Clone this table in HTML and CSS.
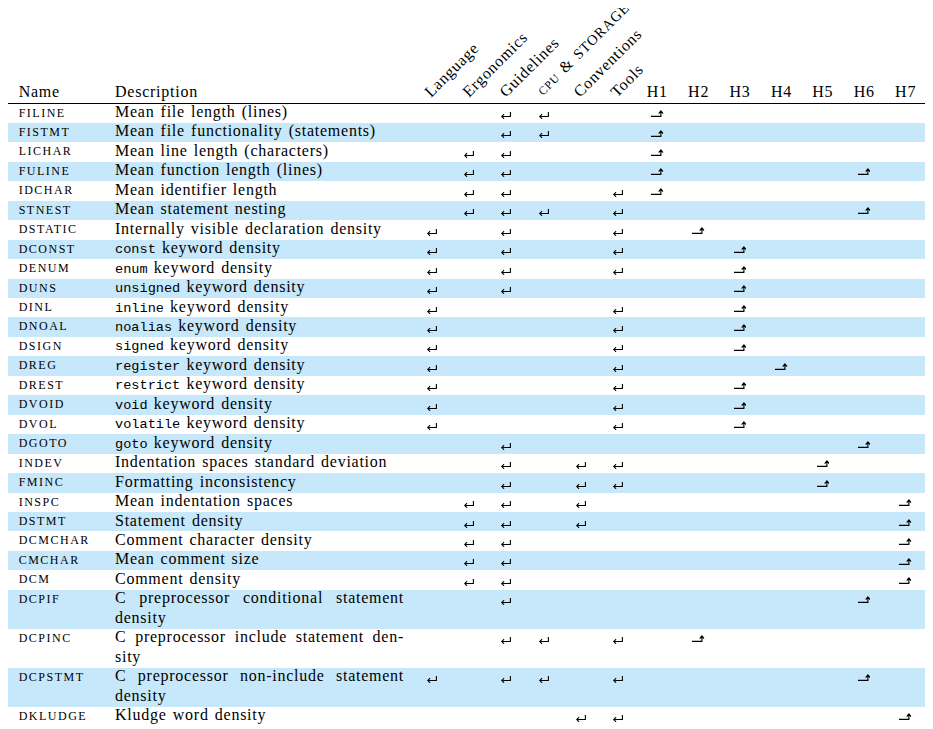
FILE: index.html
```html
<!DOCTYPE html>
<html lang="en">
<head>
<meta charset="utf-8">
<title>Metrics table</title>
<link rel="stylesheet" href="styles.css">
</head>
<body>
<svg class="defs" width="0" height="0" aria-hidden="true">
  <defs>
    <symbol id="ret" viewBox="0 0 10 7"><path d="M9.4 0V4.5H0.9M3.1 2.2L0.7 4.5L3.1 6.8" fill="none" stroke="#000" stroke-width="1.1"/></symbol>
    <symbol id="up" viewBox="0 0 12.5 7"><path d="M0 6.4H9.9V1.4M7.7 3.6L9.9 1.0L12.1 3.6" fill="none" stroke="#000" stroke-width="1.15"/></symbol>
  </defs>
</svg>
<table class="tbl">
  <colgroup>
    <col class="c-name"><col class="c-desc">
    <col class="c-a"><col class="c-a"><col class="c-a"><col class="c-a"><col class="c-a"><col class="c-a">
    <col class="c-h"><col class="c-h"><col class="c-h"><col class="c-h"><col class="c-h"><col class="c-h"><col class="c-h">
  </colgroup>
  <thead>
    <tr>
      <th class="h-name">Name</th>
      <th class="h-desc">Description</th>
      <th class="h-rot"><span class="rot">Language</span></th>
      <th class="h-rot"><span class="rot">Ergonomics</span></th>
      <th class="h-rot"><span class="rot">Guidelines</span></th>
      <th class="h-rot"><span class="rot"><span class="sc-s">CPU</span> &amp; <span class="sc-l">STORAGE</span></span></th>
      <th class="h-rot"><span class="rot">Conventions</span></th>
      <th class="h-rot"><span class="rot">Tools</span></th>
      <th class="h-h">H1</th><th class="h-h">H2</th><th class="h-h">H3</th><th class="h-h">H4</th><th class="h-h">H5</th><th class="h-h">H6</th><th class="h-h">H7</th>
    </tr>
  </thead>
  <tbody>
    <tr><td class="n">FILINE</td><td class="d"><div class="t">Mean file length (lines)</div></td>
      <td></td><td></td><td><svg class="ret"><use href="#ret"/></svg></td><td><svg class="ret"><use href="#ret"/></svg></td><td></td><td></td>
      <td><svg class="up"><use href="#up"/></svg></td><td></td><td></td><td></td><td></td><td></td><td></td></tr>
    <tr><td class="n">FISTMT</td><td class="d"><div class="t">Mean file functionality (statements)</div></td>
      <td></td><td></td><td><svg class="ret"><use href="#ret"/></svg></td><td><svg class="ret"><use href="#ret"/></svg></td><td></td><td></td>
      <td><svg class="up"><use href="#up"/></svg></td><td></td><td></td><td></td><td></td><td></td><td></td></tr>
    <tr><td class="n">LICHAR</td><td class="d"><div class="t">Mean line length (characters)</div></td>
      <td></td><td><svg class="ret"><use href="#ret"/></svg></td><td><svg class="ret"><use href="#ret"/></svg></td><td></td><td></td><td></td>
      <td><svg class="up"><use href="#up"/></svg></td><td></td><td></td><td></td><td></td><td></td><td></td></tr>
    <tr><td class="n">FULINE</td><td class="d"><div class="t">Mean function length (lines)</div></td>
      <td></td><td><svg class="ret"><use href="#ret"/></svg></td><td><svg class="ret"><use href="#ret"/></svg></td><td></td><td></td><td></td>
      <td><svg class="up"><use href="#up"/></svg></td><td></td><td></td><td></td><td></td><td><svg class="up"><use href="#up"/></svg></td><td></td></tr>
    <tr><td class="n">IDCHAR</td><td class="d"><div class="t">Mean identifier length</div></td>
      <td></td><td><svg class="ret"><use href="#ret"/></svg></td><td><svg class="ret"><use href="#ret"/></svg></td><td></td><td></td><td><svg class="ret"><use href="#ret"/></svg></td>
      <td><svg class="up"><use href="#up"/></svg></td><td></td><td></td><td></td><td></td><td></td><td></td></tr>
    <tr><td class="n">STNEST</td><td class="d"><div class="t">Mean statement nesting</div></td>
      <td></td><td><svg class="ret"><use href="#ret"/></svg></td><td><svg class="ret"><use href="#ret"/></svg></td><td><svg class="ret"><use href="#ret"/></svg></td><td></td><td><svg class="ret"><use href="#ret"/></svg></td>
      <td></td><td></td><td></td><td></td><td></td><td><svg class="up"><use href="#up"/></svg></td><td></td></tr>
    <tr><td class="n">DSTATIC</td><td class="d"><div class="t">Internally visible declaration density</div></td>
      <td><svg class="ret"><use href="#ret"/></svg></td><td></td><td><svg class="ret"><use href="#ret"/></svg></td><td></td><td></td><td><svg class="ret"><use href="#ret"/></svg></td>
      <td></td><td><svg class="up"><use href="#up"/></svg></td><td></td><td></td><td></td><td></td><td></td></tr>
    <tr><td class="n">DCONST</td><td class="d"><div class="t"><span class="tt">const</span> keyword density</div></td>
      <td><svg class="ret"><use href="#ret"/></svg></td><td></td><td><svg class="ret"><use href="#ret"/></svg></td><td></td><td></td><td><svg class="ret"><use href="#ret"/></svg></td>
      <td></td><td></td><td><svg class="up"><use href="#up"/></svg></td><td></td><td></td><td></td><td></td></tr>
    <tr><td class="n">DENUM</td><td class="d"><div class="t"><span class="tt">enum</span> keyword density</div></td>
      <td><svg class="ret"><use href="#ret"/></svg></td><td></td><td><svg class="ret"><use href="#ret"/></svg></td><td></td><td></td><td><svg class="ret"><use href="#ret"/></svg></td>
      <td></td><td></td><td><svg class="up"><use href="#up"/></svg></td><td></td><td></td><td></td><td></td></tr>
    <tr><td class="n">DUNS</td><td class="d"><div class="t"><span class="tt">unsigned</span> keyword density</div></td>
      <td><svg class="ret"><use href="#ret"/></svg></td><td></td><td><svg class="ret"><use href="#ret"/></svg></td><td></td><td></td><td></td>
      <td></td><td></td><td><svg class="up"><use href="#up"/></svg></td><td></td><td></td><td></td><td></td></tr>
    <tr><td class="n">DINL</td><td class="d"><div class="t"><span class="tt">inline</span> keyword density</div></td>
      <td><svg class="ret"><use href="#ret"/></svg></td><td></td><td></td><td></td><td></td><td><svg class="ret"><use href="#ret"/></svg></td>
      <td></td><td></td><td><svg class="up"><use href="#up"/></svg></td><td></td><td></td><td></td><td></td></tr>
    <tr><td class="n">DNOAL</td><td class="d"><div class="t"><span class="tt">noalias</span> keyword density</div></td>
      <td><svg class="ret"><use href="#ret"/></svg></td><td></td><td></td><td></td><td></td><td><svg class="ret"><use href="#ret"/></svg></td>
      <td></td><td></td><td><svg class="up"><use href="#up"/></svg></td><td></td><td></td><td></td><td></td></tr>
    <tr><td class="n">DSIGN</td><td class="d"><div class="t"><span class="tt">signed</span> keyword density</div></td>
      <td><svg class="ret"><use href="#ret"/></svg></td><td></td><td></td><td></td><td></td><td><svg class="ret"><use href="#ret"/></svg></td>
      <td></td><td></td><td><svg class="up"><use href="#up"/></svg></td><td></td><td></td><td></td><td></td></tr>
    <tr><td class="n">DREG</td><td class="d"><div class="t"><span class="tt">register</span> keyword density</div></td>
      <td><svg class="ret"><use href="#ret"/></svg></td><td></td><td></td><td></td><td></td><td><svg class="ret"><use href="#ret"/></svg></td>
      <td></td><td></td><td></td><td><svg class="up"><use href="#up"/></svg></td><td></td><td></td><td></td></tr>
    <tr><td class="n">DREST</td><td class="d"><div class="t"><span class="tt">restrict</span> keyword density</div></td>
      <td><svg class="ret"><use href="#ret"/></svg></td><td></td><td></td><td></td><td></td><td><svg class="ret"><use href="#ret"/></svg></td>
      <td></td><td></td><td><svg class="up"><use href="#up"/></svg></td><td></td><td></td><td></td><td></td></tr>
    <tr><td class="n">DVOID</td><td class="d"><div class="t"><span class="tt">void</span> keyword density</div></td>
      <td><svg class="ret"><use href="#ret"/></svg></td><td></td><td></td><td></td><td></td><td><svg class="ret"><use href="#ret"/></svg></td>
      <td></td><td></td><td><svg class="up"><use href="#up"/></svg></td><td></td><td></td><td></td><td></td></tr>
    <tr><td class="n">DVOL</td><td class="d"><div class="t"><span class="tt">volatile</span> keyword density</div></td>
      <td><svg class="ret"><use href="#ret"/></svg></td><td></td><td></td><td></td><td></td><td><svg class="ret"><use href="#ret"/></svg></td>
      <td></td><td></td><td><svg class="up"><use href="#up"/></svg></td><td></td><td></td><td></td><td></td></tr>
    <tr><td class="n">DGOTO</td><td class="d"><div class="t"><span class="tt">goto</span> keyword density</div></td>
      <td></td><td></td><td><svg class="ret"><use href="#ret"/></svg></td><td></td><td></td><td></td>
      <td></td><td></td><td></td><td></td><td></td><td><svg class="up"><use href="#up"/></svg></td><td></td></tr>
    <tr><td class="n">INDEV</td><td class="d"><div class="t">Indentation spaces standard deviation</div></td>
      <td></td><td></td><td><svg class="ret"><use href="#ret"/></svg></td><td></td><td><svg class="ret"><use href="#ret"/></svg></td><td><svg class="ret"><use href="#ret"/></svg></td>
      <td></td><td></td><td></td><td></td><td><svg class="up"><use href="#up"/></svg></td><td></td><td></td></tr>
    <tr><td class="n">FMINC</td><td class="d"><div class="t">Formatting inconsistency</div></td>
      <td></td><td></td><td><svg class="ret"><use href="#ret"/></svg></td><td></td><td><svg class="ret"><use href="#ret"/></svg></td><td><svg class="ret"><use href="#ret"/></svg></td>
      <td></td><td></td><td></td><td></td><td><svg class="up"><use href="#up"/></svg></td><td></td><td></td></tr>
    <tr><td class="n">INSPC</td><td class="d"><div class="t">Mean indentation spaces</div></td>
      <td></td><td><svg class="ret"><use href="#ret"/></svg></td><td><svg class="ret"><use href="#ret"/></svg></td><td></td><td><svg class="ret"><use href="#ret"/></svg></td><td></td>
      <td></td><td></td><td></td><td></td><td></td><td></td><td><svg class="up"><use href="#up"/></svg></td></tr>
    <tr><td class="n">DSTMT</td><td class="d"><div class="t">Statement density</div></td>
      <td></td><td><svg class="ret"><use href="#ret"/></svg></td><td><svg class="ret"><use href="#ret"/></svg></td><td></td><td><svg class="ret"><use href="#ret"/></svg></td><td></td>
      <td></td><td></td><td></td><td></td><td></td><td></td><td><svg class="up"><use href="#up"/></svg></td></tr>
    <tr><td class="n">DCMCHAR</td><td class="d"><div class="t">Comment character density</div></td>
      <td></td><td><svg class="ret"><use href="#ret"/></svg></td><td><svg class="ret"><use href="#ret"/></svg></td><td></td><td></td><td></td>
      <td></td><td></td><td></td><td></td><td></td><td></td><td><svg class="up"><use href="#up"/></svg></td></tr>
    <tr><td class="n">CMCHAR</td><td class="d"><div class="t">Mean comment size</div></td>
      <td></td><td><svg class="ret"><use href="#ret"/></svg></td><td><svg class="ret"><use href="#ret"/></svg></td><td></td><td></td><td></td>
      <td></td><td></td><td></td><td></td><td></td><td></td><td><svg class="up"><use href="#up"/></svg></td></tr>
    <tr><td class="n">DCM</td><td class="d"><div class="t">Comment density</div></td>
      <td></td><td><svg class="ret"><use href="#ret"/></svg></td><td><svg class="ret"><use href="#ret"/></svg></td><td></td><td></td><td></td>
      <td></td><td></td><td></td><td></td><td></td><td></td><td><svg class="up"><use href="#up"/></svg></td></tr>
    <tr><td class="n">DCPIF</td><td class="d"><div class="t"><span class="jl">C preprocessor conditional statement</span>density</div></td>
      <td></td><td></td><td><svg class="ret"><use href="#ret"/></svg></td><td></td><td></td><td></td>
      <td></td><td></td><td></td><td></td><td></td><td><svg class="up"><use href="#up"/></svg></td><td></td></tr>
    <tr><td class="n">DCPINC</td><td class="d"><div class="t"><span class="jl">C preprocessor include statement den-</span>sity</div></td>
      <td></td><td></td><td><svg class="ret"><use href="#ret"/></svg></td><td><svg class="ret"><use href="#ret"/></svg></td><td></td><td><svg class="ret"><use href="#ret"/></svg></td>
      <td></td><td><svg class="up"><use href="#up"/></svg></td><td></td><td></td><td></td><td></td><td></td></tr>
    <tr><td class="n">DCPSTMT</td><td class="d"><div class="t"><span class="jl">C preprocessor non-include statement</span>density</div></td>
      <td><svg class="ret"><use href="#ret"/></svg></td><td></td><td><svg class="ret"><use href="#ret"/></svg></td><td><svg class="ret"><use href="#ret"/></svg></td><td></td><td><svg class="ret"><use href="#ret"/></svg></td>
      <td></td><td></td><td></td><td></td><td></td><td><svg class="up"><use href="#up"/></svg></td><td></td></tr>
    <tr><td class="n">DKLUDGE</td><td class="d"><div class="t">Kludge word density</div></td>
      <td></td><td></td><td></td><td></td><td><svg class="ret"><use href="#ret"/></svg></td><td><svg class="ret"><use href="#ret"/></svg></td>
      <td></td><td></td><td></td><td></td><td></td><td></td><td><svg class="up"><use href="#up"/></svg></td></tr>
  </tbody>
</table>
</body>
</html>
```

FILE: styles.css
```css
html, body {
  background: #ffffff;
}
body {
  margin: 8px;
  font-family: "Liberation Serif", "Times New Roman", serif;
  color: #000;
}
.defs {
  display: block;
  width: 0;
  height: 0;
  overflow: hidden;
}
.tbl {
  table-layout: fixed;
  width: 918.4px;
  border-collapse: separate;
  border-spacing: 0;
  font-size: 16px;
  letter-spacing: 0.75px;
  word-spacing: 1.4px;
  line-height: 19.45px;
}
.c-name { width: 96.5px; }
.c-desc { width: 308.9px; }
.c-a { width: 37.2px; }
.c-h { width: 41.4px; }

/* header */
.tbl thead tr { height: 95.5px; }
.tbl th {
  font-weight: normal;
  text-align: left;
  vertical-align: bottom;
  padding: 0 0 0.84px 0;
  border-bottom: 1px solid #000;
  white-space: nowrap;
}
.h-name { padding-left: 10.7px !important; }
.h-desc { padding-left: 10.5px !important; }
.h-rot { padding-left: 18px !important; }
.h-h { text-align: center !important; }
.rot {
  display: inline-block;
  transform: translateY(1px) rotate(-45deg);
  transform-origin: 0 15.13px;
}
.sc-s { font-size: 11.5px; letter-spacing: 1px; }
.sc-l { font-size: 14.5px; letter-spacing: 0.9px; }

/* body */
.tbl tbody tr:nth-child(even) td { background: #c7e8fa; }
.tbl td {
  padding: 0;
  vertical-align: top;
  white-space: nowrap;
}
.tbl td.n {
  padding-left: 10.7px;
  font-size: 12px;
  letter-spacing: 1.5px;
  word-spacing: 0;
}
.tbl td.d {
  padding: 0 9.4px 1.5px 10.5px;
  white-space: normal;
}
.t { margin-top: -1.5px; }
.jl {
  display: block;
  text-align: justify;
  text-align-last: justify;
}
.tt {
  font-family: "Liberation Mono", "Courier New", monospace;
  font-size: 13.6px;
  letter-spacing: 0;
  line-height: 1;
}
.tbl td:nth-child(n+3) {
  text-align: center;
  font-size: 11.5px;
}
.ret {
  width: 10px;
  height: 7px;
  vertical-align: -2.5px;
}
.up {
  width: 12.5px;
  height: 7px;
  vertical-align: -0.6px;
}
```
